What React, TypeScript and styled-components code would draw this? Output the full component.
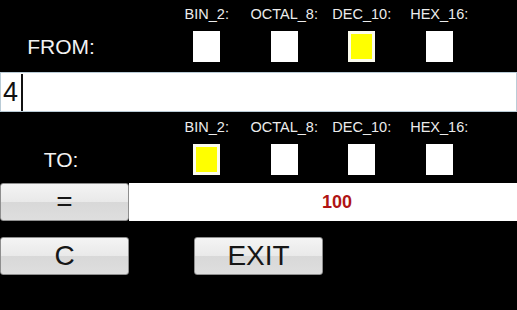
import React from "react"
import styled, { createGlobalStyle } from "styled-components"

const GlobalStyle = createGlobalStyle`
    html, body {
        margin: 0;
        padding: 0;
        background: #000;
    }
    body {
        font-family: "Liberation Sans", Arial, sans-serif;
    }
`

const BASES = ["BIN_2:", "OCTAL_8:", "DEC_10:", "HEX_16:"]

type PickerProps = {
    title: string
    selected: number
    compact?: boolean
}

const BasePicker = ({ title, selected, compact }: PickerProps) => (
    <Section $compact={compact}>
        <SideLabel>{title}</SideLabel>
        <Options>
            {BASES.map((b, i) => (
                <Option key={b}>
                    <OptionLabel>{b}</OptionLabel>
                    <Check $checked={i === selected} />
                </Option>
            ))}
        </Options>
    </Section>
)

const App = () => {
    return (
        <Screen>
            <GlobalStyle />
            <BasePicker title="FROM:" selected={2} />
            <NumberInput>
                4<Caret />
            </NumberInput>
            <BasePicker title="TO:" selected={0} compact />
            <ResultRow>
                <Button>=</Button>
                <Result>100</Result>
            </ResultRow>
            <ButtonRow>
                <Button>C</Button>
                <Button>EXIT</Button>
            </ButtonRow>
        </Screen>
    )
}

export default App

const Screen = styled.div`
    width: 517px;
    height: 310px;
    background: #000;
    display: flex;
    flex-direction: column;
    overflow: hidden;
`
const Section = styled.div<{ $compact?: boolean }>`
    display: flex;
    align-items: flex-end;
    padding-top: ${(p) => (p.$compact ? "1px" : "0")};
    padding-bottom: ${(p) => (p.$compact ? "8px" : "10px")};
`
const SideLabel = styled.div`
    width: 122px;
    margin-right: 46px;
    height: 31px;
    line-height: 31px;
    text-align: center;
    color: #f2f2f2;
    font-size: 21px;
`
const Options = styled.div`
    display: flex;
`
const Option = styled.div`
    width: 77.5px;
    display: flex;
    flex-direction: column;
    align-items: center;
`
const OptionLabel = styled.div`
    height: 28px;
    line-height: 28px;
    margin-bottom: 3px;
    color: #ececec;
    font-size: 14.5px;
    white-space: nowrap;
`
const Check = styled.div<{ $checked?: boolean }>`
    width: 27px;
    height: 31px;
    box-sizing: border-box;
    background: ${(p) => (p.$checked ? "#ffff00" : "#ffffff")};
    border: ${(p) => (p.$checked ? "3px solid #fbfbee" : "none")};
`
const NumberInput = styled.div`
    height: 40px;
    box-sizing: border-box;
    background: #fff;
    border: 1px solid #b9cbd6;
    display: flex;
    align-items: center;
    padding-left: 2px;
    font-size: 27px;
    color: #111;
`
const Caret = styled.span`
    display: inline-block;
    width: 2px;
    height: 37px;
    margin-left: 3px;
    background: #111;
`
const Button = styled.div`
    width: 129px;
    height: 38px;
    box-sizing: border-box;
    border: 1px solid #8e8e8e;
    border-radius: 3px;
    background: linear-gradient(
        #f4f4f4 0%,
        #e9e9e9 50%,
        #d8d8d8 50%,
        #dedede 100%
    );
    display: flex;
    align-items: center;
    justify-content: center;
    color: #161616;
    font-size: 28px;
`
const ResultRow = styled.div`
    display: flex;
    height: 38px;
`
const Result = styled.div`
    flex: 1;
    background: #fff;
    display: flex;
    align-items: center;
    justify-content: center;
    padding-left: 28px;
    color: #b01414;
    font-size: 18px;
    font-weight: 700;
`
const ButtonRow = styled.div`
    display: flex;
    gap: 65px;
    margin-top: 16px;
`
